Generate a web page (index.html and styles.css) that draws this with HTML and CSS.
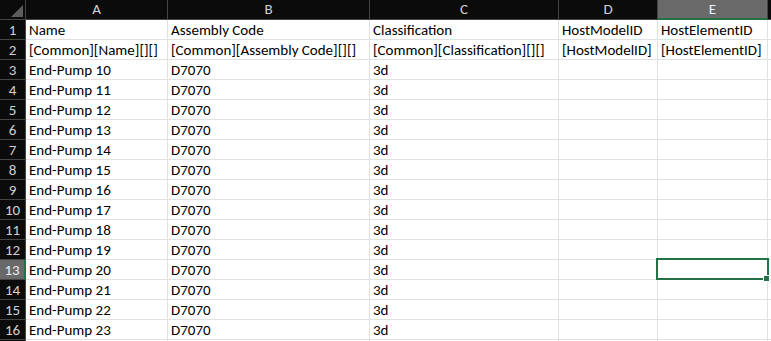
FILE: index.html
```html
<!DOCTYPE html>
<html>
<head>
<meta charset="utf-8">
<link rel="stylesheet" href="styles.css">
</head>
<body>
<div class="sheet">
  <div class="hd corner"><svg class="tri" width="14" height="14" viewBox="0 0 14 14"><polygon points="13,1 13,13 1,13" fill="#5c5c5c"/></svg></div>
  <div class="hd col">A</div>
  <div class="hd col">B</div>
  <div class="hd col">C</div>
  <div class="hd col">D</div>
  <div class="hd col sel-col">E</div>
  <div class="hd col"></div>

  <div class="hd row">1</div><div class="c">Name</div><div class="c">Assembly Code</div><div class="c">Classification</div><div class="c">HostModelID</div><div class="c">HostElementID</div><div class="c"></div>
  <div class="hd row">2</div><div class="c">[Common][Name][][]</div><div class="c">[Common][Assembly Code][][]</div><div class="c">[Common][Classification][][]</div><div class="c">[HostModelID]</div><div class="c">[HostElementID]</div><div class="c"></div>
  <div class="hd row">3</div><div class="c">End-Pump 10</div><div class="c">D7070</div><div class="c">3d</div><div class="c"></div><div class="c"></div><div class="c"></div>
  <div class="hd row">4</div><div class="c">End-Pump 11</div><div class="c">D7070</div><div class="c">3d</div><div class="c"></div><div class="c"></div><div class="c"></div>
  <div class="hd row">5</div><div class="c">End-Pump 12</div><div class="c">D7070</div><div class="c">3d</div><div class="c"></div><div class="c"></div><div class="c"></div>
  <div class="hd row">6</div><div class="c">End-Pump 13</div><div class="c">D7070</div><div class="c">3d</div><div class="c"></div><div class="c"></div><div class="c"></div>
  <div class="hd row">7</div><div class="c">End-Pump 14</div><div class="c">D7070</div><div class="c">3d</div><div class="c"></div><div class="c"></div><div class="c"></div>
  <div class="hd row">8</div><div class="c">End-Pump 15</div><div class="c">D7070</div><div class="c">3d</div><div class="c"></div><div class="c"></div><div class="c"></div>
  <div class="hd row">9</div><div class="c">End-Pump 16</div><div class="c">D7070</div><div class="c">3d</div><div class="c"></div><div class="c"></div><div class="c"></div>
  <div class="hd row">10</div><div class="c">End-Pump 17</div><div class="c">D7070</div><div class="c">3d</div><div class="c"></div><div class="c"></div><div class="c"></div>
  <div class="hd row">11</div><div class="c">End-Pump 18</div><div class="c">D7070</div><div class="c">3d</div><div class="c"></div><div class="c"></div><div class="c"></div>
  <div class="hd row">12</div><div class="c">End-Pump 19</div><div class="c">D7070</div><div class="c">3d</div><div class="c"></div><div class="c"></div><div class="c"></div>
  <div class="hd row sel-row">13</div><div class="c">End-Pump 20</div><div class="c">D7070</div><div class="c">3d</div><div class="c"></div><div class="c active"><span class="handle"></span></div><div class="c"></div>
  <div class="hd row">14</div><div class="c">End-Pump 21</div><div class="c">D7070</div><div class="c">3d</div><div class="c"></div><div class="c"></div><div class="c"></div>
  <div class="hd row">15</div><div class="c">End-Pump 22</div><div class="c">D7070</div><div class="c">3d</div><div class="c"></div><div class="c"></div><div class="c"></div>
  <div class="hd row">16</div><div class="c">End-Pump 23</div><div class="c">D7070</div><div class="c">3d</div><div class="c"></div><div class="c"></div><div class="c"></div>
  <div class="hd row"></div><div class="c"></div><div class="c"></div><div class="c"></div><div class="c"></div><div class="c"></div><div class="c"></div>
</div>
</body>
</html>
```
FILE: styles.css
```css
html, body {
  margin: 0;
  padding: 0;
  background: #ffffff;
  overflow: hidden;
}
.sheet {
  display: grid;
  grid-template-columns: 26px 142px 202px 189px 99px 110px 40px;
  grid-auto-rows: 20px;
  font-family: Carlito, Lato, "Liberation Sans", sans-serif;
  font-size: 15px;
  color: #000;
}
.sheet > div {
  box-sizing: border-box;
  border-right: 1px solid #e1e1e1;
  border-bottom: 1px solid #e1e1e1;
  white-space: nowrap;
  overflow: visible;
}
.c {
  padding: 2px 0 0 3px;
  line-height: 17px;
  position: relative;
}
.hd {
  background: #0b0b0b;
  color: #d0d0d0;
  text-align: center;
  line-height: 19px;
}
.sheet > .hd {
  border-color: #454545;
}
.sheet > .row {
  border-right-color: #454545;
  line-height: 20px;
  font-size: 15px;
}
.col {
  font-size: 15px;
}
.corner {
  position: relative;
}
.tri {
  position: absolute;
  right: 1px;
  bottom: 1px;
}
.sheet > .sel-col {
  background: #696969;
  color: #f0f0f0;
  border-bottom: 2px solid #217346;
}
.sheet > .sel-row {
  background: #696969;
  color: #f0f0f0;
  border-right: 2px solid #217346;
}
.active::after {
  content: "";
  position: absolute;
  left: -2px;
  top: -2px;
  right: -2px;
  bottom: -1px;
  border: 2px solid #217346;
}
.handle {
  position: absolute;
  right: -3px;
  bottom: -3px;
  width: 5px;
  height: 5px;
  background: #217346;
  border: 1px solid #fff;
  z-index: 2;
}
```
